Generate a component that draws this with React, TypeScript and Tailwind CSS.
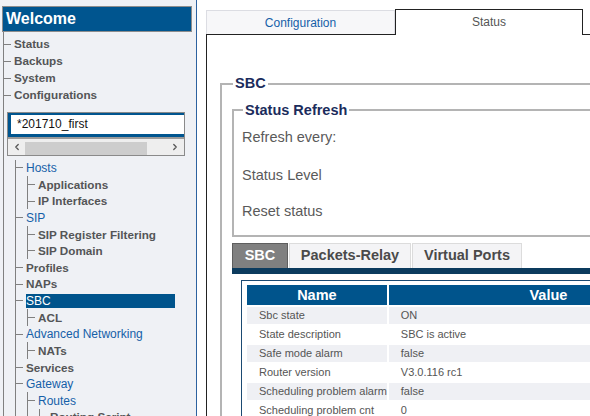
import { ChevronLeft, ChevronRight } from 'lucide-react';

type TreeNode = {
  label: string;
  kind: 'bold' | 'link' | 'selected';
  children?: TreeNode[];
};

const configTree: TreeNode[] = [
  {
    label: 'Hosts',
    kind: 'link',
    children: [
      { label: 'Applications', kind: 'bold' },
      { label: 'IP Interfaces', kind: 'bold' },
    ],
  },
  {
    label: 'SIP',
    kind: 'link',
    children: [
      { label: 'SIP Register Filtering', kind: 'bold' },
      { label: 'SIP Domain', kind: 'bold' },
    ],
  },
  { label: 'Profiles', kind: 'bold' },
  { label: 'NAPs', kind: 'bold' },
  { label: 'SBC', kind: 'selected', children: [{ label: 'ACL', kind: 'bold' }] },
  { label: 'Advanced Networking', kind: 'link', children: [{ label: 'NATs', kind: 'bold' }] },
  { label: 'Services', kind: 'bold' },
  {
    label: 'Gateway',
    kind: 'link',
    children: [
      {
        label: 'Routes',
        kind: 'link',
        children: [{ label: 'Routing Script', kind: 'bold' }],
      },
    ],
  },
];

const statusRows = [
  ['Sbc state', 'ON'],
  ['State description', 'SBC is active'],
  ['Safe mode alarm', 'false'],
  ['Router version', 'V3.0.116 rc1'],
  ['Scheduling problem alarm', 'false'],
  ['Scheduling problem cnt', '0'],
];

function Tick() {
  return <span className="w-[7px] h-px bg-[#808080] shrink-0" />;
}

function Label({ node }: { node: TreeNode }) {
  if (node.kind === 'selected') {
    return (
      <span className="w-[149px] h-[14px] leading-[14px] bg-[#00548c] text-white text-[12px] whitespace-nowrap">
        {node.label}
      </span>
    );
  }
  if (node.kind === 'link') {
    return <span className="text-[12px] text-[#1560a8] whitespace-nowrap">{node.label}</span>;
  }
  return <span className="text-[11.7px] font-bold text-[#545557] whitespace-nowrap">{node.label}</span>;
}

function TreeItem({ node }: { node: TreeNode }) {
  return (
    <li>
      <div className="flex items-center gap-[3px] h-[16.64px]">
        <Tick />
        <Label node={node} />
      </div>
      {node.children && (
        <ul className="ml-[11px] border-l border-[#808080]">
          {node.children.map((c) => (
            <TreeItem key={c.label} node={c} />
          ))}
        </ul>
      )}
    </li>
  );
}

function Sidebar() {
  const top = ['Status', 'Backups', 'System', 'Configurations'];
  return (
    <div className="w-[197px] shrink-0 h-full bg-[#eff1f5] border-r border-[#2d62a0] flex flex-col pt-[6px]">
      <div className="ml-[2px] w-[190px] h-[27px] bg-[#00558f] border border-[#8d8d8d] flex items-center pl-[3px] text-white text-[16px] font-bold">
        Welcome
      </div>
      <ul className="flex-1 ml-[3px] border-l border-[#808080] pt-[3.5px]">
        {top.map((t) => (
          <li key={t} className="flex items-center gap-[3px] h-[17px]">
            <Tick />
            <span className="text-[11.7px] font-bold text-[#545557]">{t}</span>
          </li>
        ))}
        <li className="pt-[8px]">
          <div className="flex items-start gap-[3px]">
            <span className="mt-[8px]">
              <Tick />
            </span>
            <div className="w-[178px] h-[44px] border border-[#8a8a8a] overflow-hidden flex flex-col">
              <div className="bg-[#00558f] pt-[2px] pb-[3px] pl-[3px] w-[400px]">
                <div className="h-[19px] bg-white flex items-center pl-[6px] text-[12px] text-[#111]">
                  *201710_first
                </div>
              </div>
              <div className="h-[2px] bg-[#9a9a9a] w-full" />
              <div className="h-[16px] bg-[#eeeeee] flex items-end">
                <div className="w-[17px] h-full flex items-center justify-center text-[#555]">
                  <ChevronLeft size={10} strokeWidth={3} />
                </div>
                <div className="w-[122px] h-[13px] bg-[#cdcdcd]" />
                <div className="flex-1 h-full flex items-center justify-end pr-[4px] text-[#555]">
                  <ChevronRight size={10} strokeWidth={3} />
                </div>
              </div>
            </div>
          </div>
          <ul className="mt-[4px] ml-[11px] border-l border-[#808080]">
            {configTree.map((n) => (
              <TreeItem key={n.label} node={n} />
            ))}
          </ul>
        </li>
      </ul>
    </div>
  );
}

function StatusPanel() {
  return (
    <div className="flex-1 min-w-0 h-full overflow-hidden pl-[9px] pt-[9px] bg-white">
      <div className="flex items-end h-[25px]">
        <div className="w-[189px] h-[24px] bg-[#f7f7f9] border border-b-0 border-[#dcdde3] flex items-center justify-center text-[12px] text-[#1560a8]">
          Configuration
        </div>
        <div className="relative z-10 -mb-px w-[188px] h-[26px] bg-white border border-b-0 border-[#222] flex items-center justify-center pb-px text-[12px] text-[#555]">
          Status
        </div>
      </div>
      <div className="w-[700px] h-[400px] border-l border-t border-[#222] pl-[13px]">
        <fieldset className="mt-[40px] w-[620px] border-2 border-[#b4b4b4] pl-[10px] pr-0 pb-0">
          <legend className="ml-[1px] px-[2px] text-[14.5px] leading-[17px] font-bold text-[#1b2c5c]">SBC</legend>
          <fieldset className="mt-[9.5px] border-2 border-[#b4b4b4] pl-[8px] pr-0 pb-[14.5px]">
            <legend className="ml-[1px] px-[2px] text-[14.5px] leading-[17px] font-bold text-[#1b2c5c]">
              Status Refresh
            </legend>
            <div className="flex flex-col pt-[10.5px] text-[14.5px] leading-[17px] text-[#5a5a5a]">
              <span>Refresh every:</span>
              <span className="mt-[21px]">Status Level</span>
              <span className="mt-[19px]">Reset status</span>
            </div>
          </fieldset>

          <div className="mt-[6px] flex gap-[1px] h-[25px]">
            <div className="w-[56px] bg-[#808080] border border-b-0 border-[#5e5e5e] flex items-center justify-center text-white font-bold text-[14.5px]">
              SBC
            </div>
            <div className="w-[122px] bg-[#f4f4f6] border border-b-0 border-[#dcdcdc] flex items-center justify-center text-[#4a4a4a] font-bold text-[14.5px]">
              Packets-Relay
            </div>
            <div className="w-[110px] bg-[#f4f4f6] border border-b-0 border-[#dcdcdc] flex items-center justify-center text-[#4a4a4a] font-bold text-[14.5px]">
              Virtual Ports
            </div>
          </div>
          <div className="h-[6px] bg-[#0c3b5e]" />
          <div className="pl-[9px] pt-[6px]">
            <div className="border-l border-t border-[#1b4a72] pl-[3px] pt-[2px]">
              <table className="w-[465px] border-separate border-spacing-[2px]">
                <thead>
                  <tr className="h-[20px]">
                    <th className="w-[137px] bg-[#00548c] text-white font-bold text-[14.5px] leading-[20px] p-0">Name</th>
                    <th className="bg-[#00548c] text-white font-bold text-[14.5px] leading-[20px] p-0">Value</th>
                  </tr>
                </thead>
                <tbody>
                  {statusRows.map(([name, value], i) => (
                    <tr key={name} className="h-[17px]">
                      <td className={`pl-[12px] p-0 text-[11px] leading-[17px] text-[#555] whitespace-nowrap ${i % 2 === 0 ? 'bg-[#eff0f4]' : 'bg-white'}`}>
                        {name}
                      </td>
                      <td className={`pl-[12px] p-0 text-[11px] leading-[17px] text-[#555] whitespace-nowrap ${i % 2 === 0 ? 'bg-[#eff0f4]' : 'bg-white'}`}>
                        {value}
                      </td>
                    </tr>
                  ))}
                </tbody>
              </table>
            </div>
          </div>
        </fieldset>
      </div>
    </div>
  );
}

export default function App() {
  return (
    <div className="w-[590px] h-[416px] overflow-hidden flex font-['Liberation_Sans',Arial,sans-serif]">
      <Sidebar />
      <StatusPanel />
    </div>
  );
}
